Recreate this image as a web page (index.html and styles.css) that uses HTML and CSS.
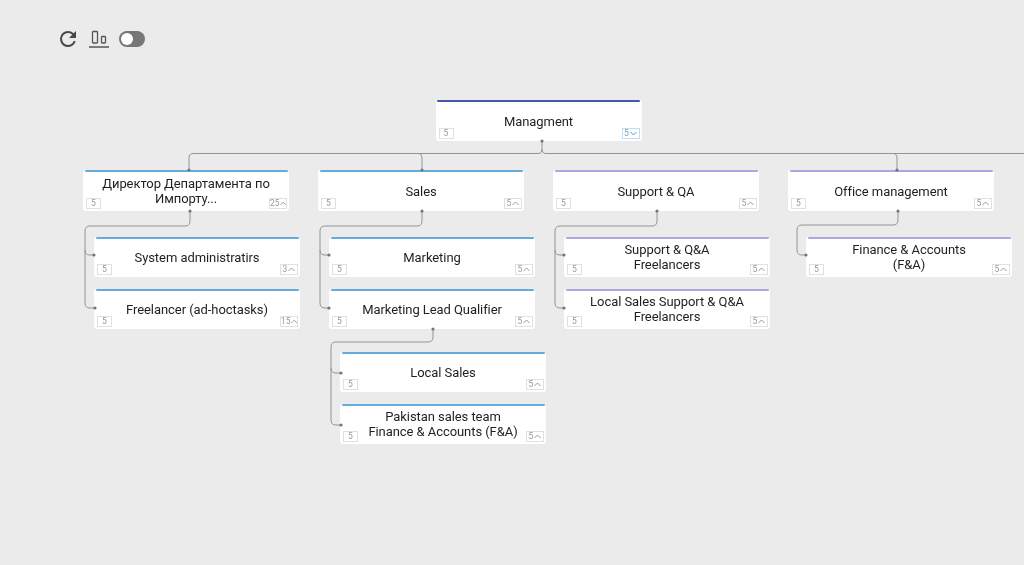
FILE: index.html
```html
<!DOCTYPE html>
<html lang="en">
<head>
<meta charset="utf-8">
<title>Org chart</title>
<link rel="stylesheet" href="styles.css">
</head>
<body>
<main class="page">
  <div class="toolbar">
    <svg class="icon-refresh" width="24" height="24" viewBox="0 0 24 24"><path d="M17.65 6.35A7.96 7.96 0 0 0 12 4a8 8 0 1 0 7.73 10h-2.08A6 6 0 1 1 12 6c1.66 0 3.14.69 4.22 1.78L13 11h7V4l-2.35 2.35z"/></svg>
    <svg class="icon-align" width="20" height="20" viewBox="0 0 20 20"><rect x="3.500" y="2.500" width="5" height="11.500" rx=".8"/><rect x="12.500" y="7.500" width="4" height="6.500" rx=".8"/><line class="base" x1="0" y1="18" x2="20" y2="18"/></svg>
    <span class="toggle"><span class="knob"></span></span>
  </div>

  <svg class="links" width="1024" height="565" viewBox="0 0 1024 565">
    <g class="lines">
      <path d="M542 141V149Q542 153.500 538 153.500H193Q189 153.500 189 158V170"/>
      <path d="M422 170V158Q422 153.500 418 153.500"/>
      <path d="M542 149Q542 153.500 546 153.500H1024"/>
      <path d="M893 153.500Q897 153.500 897 158V170"/>
      <path d="M190 211V221Q190 226 185 226H90Q85 226 85 231V303Q85 308 90 308H95"/>
      <path d="M85 250Q85 255 90 255H94"/>
      <path d="M422 211V221Q422 226 417 226H325Q320 226 320 231V303Q320 308 325 308H329"/>
      <path d="M320 250Q320 255 325 255H329"/>
      <path d="M657 211V221Q657 226 652 226H560Q555 226 555 231V303Q555 308 560 308H564"/>
      <path d="M555 250Q555 255 560 255H564"/>
      <path d="M898 211V220Q898 225 893 225H802Q797 225 797 230V250Q797 255 802 255H806"/>
      <path d="M433 329V337Q433 342 428 342H336Q331 342 331 347V420Q331 425 336 425H341"/>
      <path d="M331 368Q331 373 336 373H341"/>
    </g>
    <g class="dots">
      <circle cx="542" cy="141" r="1.600"/><circle cx="189" cy="170" r="1.600"/><circle cx="422" cy="170" r="1.600"/><circle cx="897" cy="170" r="1.600"/>
      <circle cx="190" cy="211" r="1.600"/><circle cx="94" cy="255" r="1.600"/><circle cx="95" cy="308" r="1.600"/>
      <circle cx="422" cy="211" r="1.600"/><circle cx="329" cy="255" r="1.600"/><circle cx="329" cy="308" r="1.600"/>
      <circle cx="657" cy="211" r="1.600"/><circle cx="564" cy="255" r="1.600"/><circle cx="564" cy="308" r="1.600"/>
      <circle cx="898" cy="211" r="1.600"/><circle cx="806" cy="255" r="1.600"/>
      <circle cx="433" cy="329" r="1.600"/><circle cx="341" cy="373" r="1.600"/><circle cx="341" cy="425" r="1.600"/>
    </g>
  </svg>

  <article class="node navy tall n-root"><p>Managment</p><span class="count">5</span><span class="total open">5<svg class="chev" width="7" height="5" viewBox="0 0 7 5"><path d="M.5 1l3 3 3-3"/></svg></span></article>

  <article class="node blue tall n-a"><p>Директор Департамента по Импорту...</p><span class="count">5</span><span class="total wide">25<svg class="chev" width="7" height="5" viewBox="0 0 7 5"><path d="M.5 4l3-3 3 3"/></svg></span></article>
  <article class="node blue tall n-b"><p>Sales</p><span class="count">5</span><span class="total">5<svg class="chev" width="7" height="5" viewBox="0 0 7 5"><path d="M.5 4l3-3 3 3"/></svg></span></article>
  <article class="node violet tall n-c"><p>Support &amp; QA</p><span class="count">5</span><span class="total">5<svg class="chev" width="7" height="5" viewBox="0 0 7 5"><path d="M.5 4l3-3 3 3"/></svg></span></article>
  <article class="node violet tall n-d"><p>Office management</p><span class="count">5</span><span class="total">5<svg class="chev" width="7" height="5" viewBox="0 0 7 5"><path d="M.5 4l3-3 3 3"/></svg></span></article>

  <article class="node blue n-a1"><p>System administratirs</p><span class="count">5</span><span class="total">3<svg class="chev" width="7" height="5" viewBox="0 0 7 5"><path d="M.5 4l3-3 3 3"/></svg></span></article>
  <article class="node blue n-a2"><p>Freelancer (ad-hoctasks)</p><span class="count">5</span><span class="total wide">15<svg class="chev" width="7" height="5" viewBox="0 0 7 5"><path d="M.5 4l3-3 3 3"/></svg></span></article>
  <article class="node blue n-b1"><p>Marketing</p><span class="count">5</span><span class="total">5<svg class="chev" width="7" height="5" viewBox="0 0 7 5"><path d="M.5 4l3-3 3 3"/></svg></span></article>
  <article class="node blue n-b2"><p>Marketing Lead Qualifier</p><span class="count">5</span><span class="total">5<svg class="chev" width="7" height="5" viewBox="0 0 7 5"><path d="M.5 4l3-3 3 3"/></svg></span></article>
  <article class="node violet n-c1"><p>Support &amp; Q&amp;A<br>Freelancers</p><span class="count">5</span><span class="total">5<svg class="chev" width="7" height="5" viewBox="0 0 7 5"><path d="M.5 4l3-3 3 3"/></svg></span></article>
  <article class="node violet n-c2"><p>Local Sales Support &amp; Q&amp;A<br>Freelancers</p><span class="count">5</span><span class="total">5<svg class="chev" width="7" height="5" viewBox="0 0 7 5"><path d="M.5 4l3-3 3 3"/></svg></span></article>
  <article class="node violet n-d1"><p>Finance &amp; Accounts<br>(F&amp;A)</p><span class="count">5</span><span class="total">5<svg class="chev" width="7" height="5" viewBox="0 0 7 5"><path d="M.5 4l3-3 3 3"/></svg></span></article>
  <article class="node blue n-e1"><p>Local Sales</p><span class="count">5</span><span class="total">5<svg class="chev" width="7" height="5" viewBox="0 0 7 5"><path d="M.5 4l3-3 3 3"/></svg></span></article>
  <article class="node blue n-e2"><p>Pakistan sales team<br>Finance &amp; Accounts (F&amp;A)</p><span class="count">5</span><span class="total">5<svg class="chev" width="7" height="5" viewBox="0 0 7 5"><path d="M.5 4l3-3 3 3"/></svg></span></article>
</main>
</body>
</html>
```

FILE: styles.css
```css
* { box-sizing: border-box; }

html, body {
  margin: 0;
  height: 100%;
  background: #ebebeb;
}

.page {
  position: relative;
  width: 1024px;
  height: 565px;
  overflow: hidden;
  background: #ebebeb;
  font-family: Roboto, "Noto Sans", "Noto Sans CJK SC", sans-serif;
  color: #1f1f1f;
  filter: blur(.35px);
}

/* toolbar */
.toolbar {
  display: flex;
  align-items: center;
  gap: 9px;
  padding: 27px 0 0 56px;
}
.icon-refresh { fill: #484848; }
.icon-align { fill: none; stroke: #555; stroke-width: 1.3; }
.icon-align .base { stroke-width: 1.5; }
.toggle {
  display: flex;
  align-items: center;
  width: 26px;
  height: 16px;
  margin-left: 1px;
  padding-left: 2px;
  border-radius: 8px;
  background: #777;
}
.knob {
  width: 12px;
  height: 12px;
  border-radius: 50%;
  background: #fff;
}

/* connectors */
.links {
  position: absolute;
  left: 0;
  top: 0;
  z-index: 1;
}
.lines path {
  fill: none;
  stroke: #949494;
  stroke-width: 1;
}
.dots circle { fill: #757575; }

/* nodes: a free canvas of diagram boxes */
.node {
  position: absolute;
  display: flex;
  align-items: center;
  justify-content: center;
  width: 206px;
  height: 40px;
  padding: 0 10px;
  background: #fff;
  border-radius: 3px;
  text-align: center;
}
.tall { height: 41px; padding-top: 1px; }
.node::before {
  content: "";
  position: absolute;
  left: 1.500px;
  right: 1.500px;
  top: 0;
  height: 2px;
  border-radius: 1px;
}
.navy::before { background: #4656a8; }
.blue::before { background: #64abe0; }
.violet::before { background: #b0a4e2; }
.node p {
  margin: 0;
  font-size: 13px;
  line-height: 15px;
  letter-spacing: -.005em;
}

.count, .total {
  position: absolute;
  bottom: 2px;
  display: flex;
  align-items: center;
  justify-content: center;
  height: 11px;
  border: 1px solid #e0e0e0;
  font-size: 8.500px;
  line-height: 1;
  color: #999;
}
.count { left: 3px; width: 15px; }
.total { right: 2px; width: 18px; gap: 1px; }
.total.wide { gap: 0; }
.total.open { border-color: #bfe0f2; color: #7d9fb5; }
.chev {
  fill: none;
  stroke: #999;
  stroke-width: 1;
}
.open .chev { stroke: #5a9fc8; }

.n-root { left: 435.500px; top: 100px; }
.n-a { left: 83px; top: 170px; }
.n-b { left: 318px; top: 170px; }
.n-c { left: 553px; top: 170px; }
.n-d { left: 788px; top: 170px; }
.n-a1 { left: 94px; top: 237px; }
.n-a2 { left: 94px; top: 289px; }
.n-b1 { left: 329px; top: 237px; }
.n-b2 { left: 329px; top: 289px; }
.n-c1 { left: 564px; top: 237px; }
.n-c2 { left: 564px; top: 289px; }
.n-d1 { left: 806px; top: 237px; }
.n-e1 { left: 340px; top: 352px; }
.n-e2 { left: 340px; top: 404px; }
```
